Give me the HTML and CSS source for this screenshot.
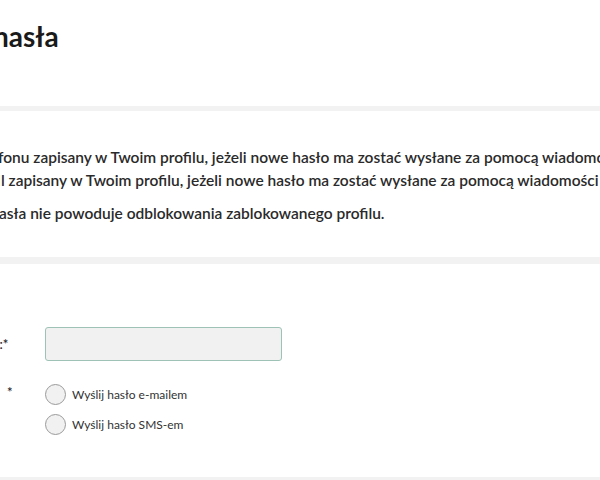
FILE: index.html
```html
<!DOCTYPE html>
<html lang="pl">
<head>
<meta charset="utf-8">
<title>Przypomnienie hasła</title>
<link rel="stylesheet" href="styles.css">
</head>
<body>
<div class="page">
  <section class="card card-title">
    <h1 class="title">hasła</h1>
  </section>
  <section class="card card-info">
    <p class="line line1">fonu zapisany w Twoim profilu, jeżeli nowe hasło ma zostać wysłane za pomocą wiadomości SMS.</p>
    <p class="line line2">l zapisany w Twoim profilu, jeżeli nowe hasło ma zostać wysłane za pomocą wiadomości e-mail.</p>
    <p class="line line3">asła nie powoduje odblokowania zablokowanego profilu.</p>
  </section>
  <section class="card card-form">
    <div class="row row-input">
      <label class="lbl" for="login">E:*</label>
      <input class="field" id="login" type="text">
    </div>
    <div class="row row-radio">
      <span class="lbl lbl-star">*</span>
      <div class="radios">
        <label class="radio"><span class="dot"></span><span>Wyślij hasło e-mailem</span></label>
        <label class="radio"><span class="dot"></span><span>Wyślij hasło SMS-em</span></label>
      </div>
    </div>
  </section>
</div>
</body>
</html>
```
FILE: styles.css
```css
html, body {
  margin: 0;
  padding: 0;
  background: #f2f2f2;
  overflow: hidden;
}
body {
  font-family: Lato, "Noto Sans", sans-serif;
  color: #2b2b2b;
  width: 600px;
  height: 480px;
}
.page {
  display: flex;
  flex-direction: column;
  gap: 5px;
}
.card {
  background: #fff;
  overflow: hidden;
}
.card-title {
  height: 106px;
}
.title {
  margin: 18px 0 0 -7px;
  font-size: 28px;
  font-weight: 700;
  color: #1a1a1a;
  line-height: 36px;
}
.card-info {
  height: 146px;
  padding-top: 35px;
  box-sizing: border-box;
}
.line {
  margin: 0;
  white-space: nowrap;
  font-size: 15.5px;
  font-weight: 600;
  line-height: 23px;
  color: #2a2a2a;
}
.line1 { margin-left: -2px; }
.line2 { margin-left: 1px; }
.line3 { margin-left: -1px; margin-top: 10px; }
.card-form {
  margin-top: 2px;
  height: 213px;
  padding-top: 63px;
  box-sizing: border-box;
}
.row {
  display: flex;
}
.lbl {
  width: 44px;
  flex: none;
  font-size: 13px;
  font-weight: 600;
  margin-left: -8px;
}
.row-input .lbl {
  padding-top: 9px;
}
.field {
  width: 237px;
  height: 34px;
  box-sizing: border-box;
  margin: 0 0 0 9px;
  border: 1px solid #9ec3b6;
  border-radius: 3px;
  background: #f0f1f0;
}
.row-radio {
  margin-top: 23px;
}
.lbl-star {
  padding-left: 15px;
  box-sizing: border-box;
  width: 53px;
}
.radios {
  display: flex;
  flex-direction: column;
  gap: 9px;
}
.radio {
  display: flex;
  align-items: center;
  gap: 6px;
  font-size: 12px;
  color: #333;
}
.dot {
  width: 21px;
  height: 21px;
  box-sizing: border-box;
  border: 1px solid #9a9a9a;
  border-radius: 50%;
  background: #f0f1f0;
}
```
